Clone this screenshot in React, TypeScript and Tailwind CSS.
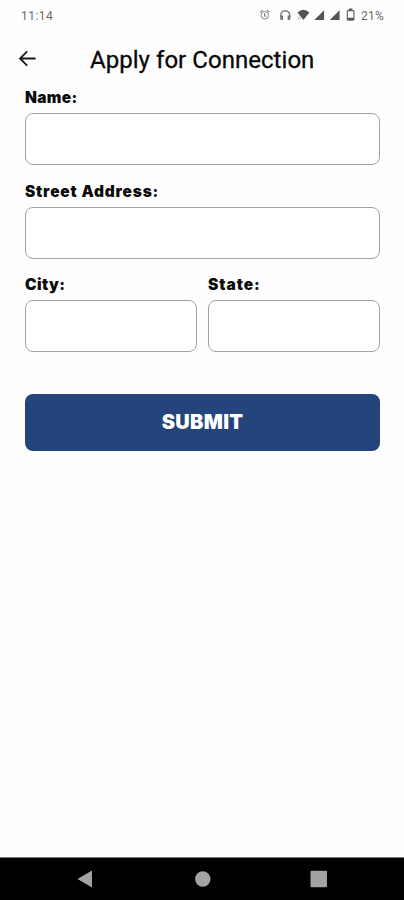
import React from "react";

function StatusIcons() {
  return (
    <svg width="100" height="20" viewBox="258 5 100 20" fill="none" stroke="#666" strokeWidth="1" aria-hidden="true">
      <g stroke="#888">
        <circle cx="264.8" cy="15.3" r="3.8" />
        <path d="M260.3 12.2l2.3-2M269.3 12.2l-2.3-2M264.6 13v2.6l1.6 1" strokeWidth="1.2" />
      </g>
      <path d="M280.8 17v-1.8a4.5 4.5 0 0 1 9 0V17" stroke="#777" strokeWidth="1.4" />
      <path d="M280.2 15.5h2.8v4.6h-1.5a1.3 1.3 0 0 1-1.3-1.3zM290.4 15.5h-2.8v4.6h1.5a1.3 1.3 0 0 0 1.3-1.3z" fill="#777" stroke="none" />
      <path d="M297.4 12.4q6-5.2 12 0l-6 7.6z" fill="#555" stroke="none" />
      <path d="M298 19.5l1.3-3M299.8 19.5l.8-1.6" stroke="#999" strokeWidth=".8" />
      <path d="M314.3 20h9.8v-9.8zM329.8 20h9.8v-9.8z" fill="#555" stroke="none" />
      <rect x="347.3" y="10.6" width="6.6" height="9.5" rx=".8" strokeWidth="1.2" />
      <path d="M348.8 8.6h3.6v1.8h-3.6zM347.3 17.7h6.6v2.4h-6.6z" fill="#555" stroke="none" />
    </svg>
  );
}

type FieldProps = { label: string; name: string; className?: string; labelClassName?: string };

function Field({ label, name, className = "", labelClassName = "" }: FieldProps) {
  return (
    <label className={`block min-w-0 flex-1 ${className}`}>
      <span
        className={`block h-[24px] pt-px whitespace-nowrap font-[Inter,sans-serif] text-[15.5px] leading-[15px] font-black text-[#0c0c0c] ${labelClassName}`}
      >
        {label}
      </span>
      <input
        name={name}
        className="block h-[52px] w-full rounded-[8px] border border-[#a3a3a3] bg-white px-3 font-[Roboto,sans-serif] text-base outline-none"
      />
    </label>
  );
}

export default function App() {
  return (
    <div className="flex h-[900px] w-[404px] flex-col overflow-hidden bg-[#fefefe] font-[Roboto,sans-serif]">
      <div className="flex h-[30px] shrink-0 items-center pl-[21px]">
        <span className="w-[237px] pt-[2px] text-[12px] leading-[15px] tracking-[0.45px] text-[#6b6b6b]">11:14</span>
        <StatusIcons />
        <span className="ml-[3px] pt-[2px] text-[12px] leading-[15px] tracking-[0.2px] text-[#6b6b6b]">21%</span>
      </div>
      <header className="flex h-[59px] shrink-0 items-center pb-px">
        <button aria-label="Back" className="ml-[18px] flex h-5 w-5 items-center">
          <svg width="20" height="20" viewBox="18 50 20 20" fill="none" stroke="#181818" strokeWidth="1.8">
            <path d="M35.6 59.5H20.6M27.2 52.4L20 59.5l7.2 7.1" />
          </svg>
        </button>
        <h1 className="ml-[52px] pt-[2px] text-[24px] leading-[30px] tracking-[0.04px] whitespace-nowrap text-[#080808] [-webkit-text-stroke:0.3px_#080808]">
          Apply for Connection
        </h1>
      </header>
      <main className="flex-1 pr-[24px] pl-[25px]">
        <form onSubmit={(event) => event.preventDefault()}>
          <Field label="Name:" name="name" labelClassName="tracking-[0.3px]" />
          <Field label="Street Address:" name="street" className="mt-[18px]" labelClassName="tracking-[0.8px]" />
          <div className="mt-[17px] flex gap-[11px]">
            <Field label="City:" name="city" labelClassName="tracking-[0.4px]" />
            <Field label="State:" name="state" labelClassName="tracking-[0.95px]" />
          </div>
          <button className="mt-[42px] h-[57px] w-full rounded-[8px] bg-[#24457b] pb-[2px] font-[Inter,sans-serif] text-[20px] font-black tracking-[0.3px] text-white">
            SUBMIT
          </button>
        </form>
      </main>
      <nav className="h-[43px] shrink-0 border-t border-[#777] bg-black">
        <svg width="404" height="42" viewBox="0 858 404 42" fill="#a3a3a3" aria-hidden="true">
          <path d="M77.5 879L92 870.5v17z" />
          <circle cx="202.8" cy="879" r="7.7" />
          <rect x="310.5" y="870.7" width="16.5" height="16.5" rx="1.2" />
        </svg>
      </nav>
    </div>
  );
}
